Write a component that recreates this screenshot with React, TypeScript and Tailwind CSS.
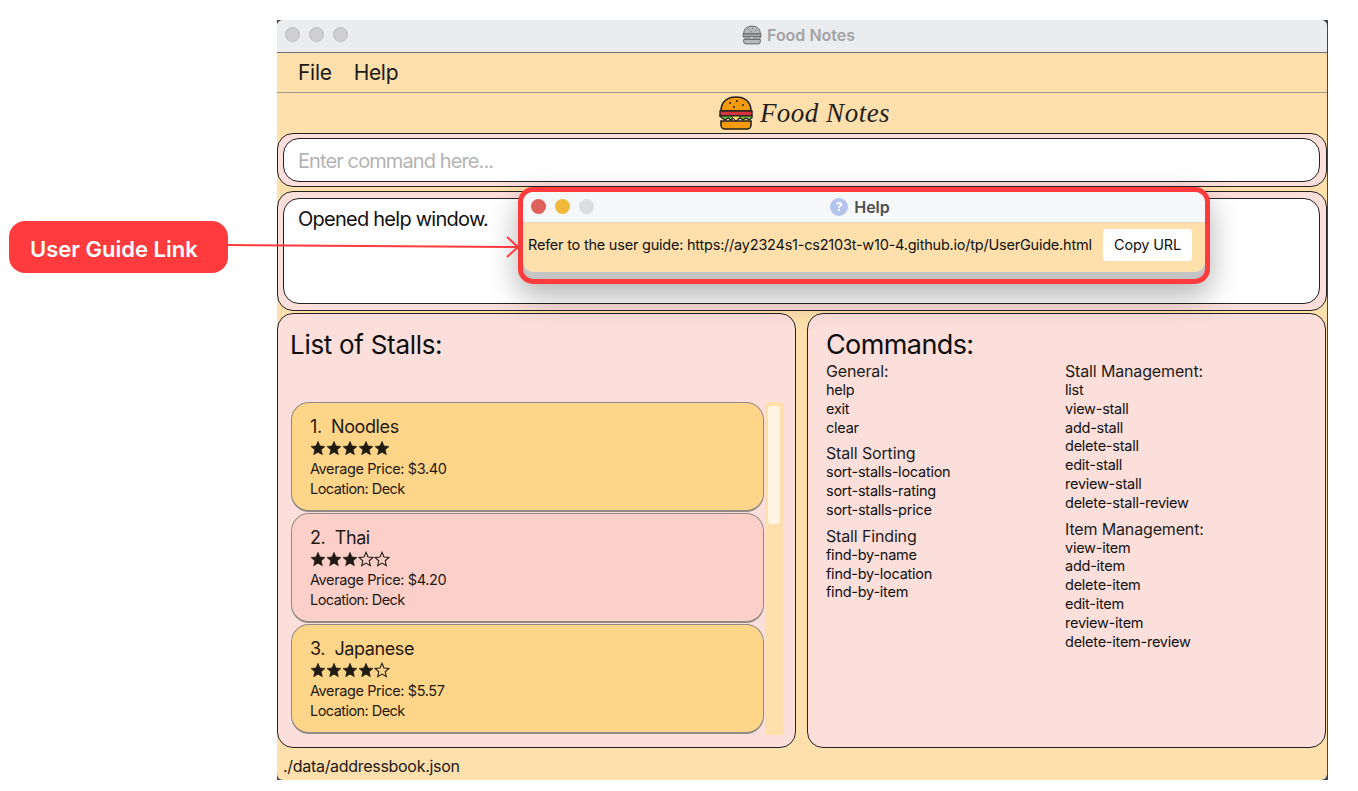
import React from 'react';

const stalls = [
  { name: '1.  Noodles', rating: 5, price: '$3.40', bg: 'bg-[#ffd589]' },
  { name: '2.  Thai', rating: 3, price: '$4.20', bg: 'bg-[#fdcfc9]' },
  { name: '3.  Japanese', rating: 4, price: '$5.57', bg: 'bg-[#ffd589]' },
];

const leftGroups = [
  { title: 'General:', items: ['help', 'exit', 'clear'] },
  { title: 'Stall Sorting', items: ['sort-stalls-location', 'sort-stalls-rating', 'sort-stalls-price'] },
  { title: 'Stall Finding', items: ['find-by-name', 'find-by-location', 'find-by-item'] },
];

const rightGroups = [
  {
    title: 'Stall Management:',
    items: ['list', 'view-stall', 'add-stall', 'delete-stall', 'edit-stall', 'review-stall', 'delete-stall-review'],
  },
  {
    title: 'Item Management:',
    items: ['view-item', 'add-item', 'delete-item', 'edit-item', 'review-item', 'delete-item-review'],
  },
];

const Burger = ({ grey = false, className }: { grey?: boolean; className?: string }) => (
  <svg viewBox="0 0 36 36" className={className}>
    <path d="M3 16C3 6 10 2 18 2s15 4 15 14z" fill={grey ? '#a3a3a3' : '#f59a0c'} stroke="#222" strokeWidth="1.6" />
    <path d="M11 8h2M18 6h2M24 10h2M15 12h2" stroke="#222" strokeWidth="1.4" />
    <rect x="2" y="16" width="32" height="5" fill={grey ? '#8a8a8a' : '#d8323c'} stroke="#222" strokeWidth="1.4" />
    <path d="M2 21h32v2l-3 2-3-2-3 2-3-2-3 2-3-2-3 2-3-2-3 2-3-2z" fill={grey ? '#b5b5b5' : '#6cbb3c'} stroke="#222" strokeWidth="1.2" />
    <path d="M13 21h10l-5 5z" fill={grey ? '#ddd' : '#ffe066'} stroke="#222" strokeWidth="1" />
    <path d="M3 26h30v4a4 4 0 0 1-4 4H7a4 4 0 0 1-4-4z" fill={grey ? '#a3a3a3' : '#f59a0c'} stroke="#222" strokeWidth="1.6" />
  </svg>
);

const Star = ({ filled }: { filled: boolean }) => (
  <svg viewBox="0 0 24 24" className="h-[16px] w-[16px]">
    <path
      d="M12 2l3 7 7.5.7-5.7 5 1.7 7.3L12 18.2 5.5 22l1.7-7.3-5.7-5L9 9z"
      fill={filled ? '#1f1a12' : 'none'}
      stroke="#1f1a12"
      strokeWidth={filled ? 1 : 1.6}
    />
  </svg>
);

const Dots = () => (
  <div className="flex gap-[9px]">
    <span className="h-[15px] w-[15px] rounded-full bg-[#cfcfd1] border border-[#bdbdbf]" />
    <span className="h-[15px] w-[15px] rounded-full bg-[#cfcfd1] border border-[#bdbdbf]" />
    <span className="h-[15px] w-[15px] rounded-full bg-[#cfcfd1] border border-[#bdbdbf]" />
  </div>
);

const CommandColumn = ({ groups }: { groups: { title: string; items: string[] }[] }) => (
  <div className="flex flex-col gap-[6px]">
    {groups.map((g) => (
      <div key={g.title}>
        <div className="text-[16px] leading-[20px] text-[#1c1c1c] tracking-[-0.15px]">{g.title}</div>
        {g.items.map((it) => (
          <div key={it} className="text-[14.5px] leading-[18.8px] text-[#111] tracking-[-0.25px]">
            {it}
          </div>
        ))}
      </div>
    ))}
  </div>
);

export default function App() {
  return (
    <div className="relative h-[791px] w-[1358px] overflow-hidden bg-white font-['Inter',sans-serif]">
      {/* main window, dark backing only shows at the corners and right edge */}
      <div className="ml-[277px] pt-[20px]">
        <div className="h-[760px] w-[1051px] bg-[#3f4552]">
          <div className="flex h-[760px] w-[1050px] flex-col overflow-hidden rounded-[6px] bg-[#ffdfac]">
            <div className="relative flex h-[33px] shrink-0 items-center border-b border-[#6f7074] bg-[#ebecee] pb-[3px] pl-[8px]">
              <Dots />
              <div className="absolute inset-x-0 top-[3px] flex items-center justify-center gap-[5px] pr-[7px]">
                <Burger grey className="h-[20px] w-[20px] opacity-70" />
                <span className="text-[16px] font-semibold text-[#a2a3a5]">Food Notes</span>
              </div>
            </div>

            <div className="flex h-[40px] shrink-0 items-center gap-[22px] border-b border-[#a0998c] pl-[21px] text-[21px] tracking-[-0.3px] text-[#1a1a1a]">
              <span>File</span>
              <span>Help</span>
            </div>

            <div className="flex h-[40px] shrink-0 items-center justify-center gap-[6px] pl-[4px]">
              <Burger className="h-[36px] w-[36px]" />
              <span className="font-['Liberation_Serif',serif] text-[27px] italic tracking-[0.5px] text-[#222]">
                Food Notes
              </span>
            </div>

            <div className="flex h-[54px] shrink-0 items-center rounded-[16px] border border-[#222] bg-[#fcdeda] pl-[5px] pr-[6px]">
              <div className="flex h-[44px] w-full items-center rounded-[16px] border border-[#222] bg-white pl-[14px] pt-[1px] text-[20px] tracking-[-0.9px] text-[#b4b4b4]">
                Enter command here...
              </div>
            </div>

            <div className="mt-[4px] h-[120px] shrink-0 rounded-[16px] border border-[#222] bg-[#fcdeda] pl-[5px] pr-[6px] py-[6px]">
              <div className="h-full rounded-[16px] border border-[#222] bg-white pl-[14px] pt-[7px] text-[20px] leading-[26px] tracking-[-0.75px] text-[#111]">
                Opened help window.
              </div>
            </div>

            <div className="mt-[2px] flex h-[435px] shrink-0 gap-[11px]">
              <div className="flex w-[519px] flex-col rounded-[16px] border border-[#222] bg-[#fcdeda] pl-[13px]">
                <div className="-ml-px mt-[14px] text-[26px] leading-[34px] tracking-[-0.3px] text-[#0d0d0d]">List of Stalls:</div>
                <div className="mt-[40px] flex gap-px">
                  <div className="flex w-[473px] flex-col gap-px">
                    {stalls.map((s) => (
                      <div
                        key={s.name}
                        className={`h-[110px] rounded-[18px] border border-[#8f8a84] border-b-[2px] ${s.bg} pl-[18px] pt-[12px] text-[#1f1a12]`}
                      >
                        <div className="whitespace-pre text-[18px] leading-[24px] tracking-[-0.4px]">{s.name}</div>
                        <div className="flex h-[18px] items-center">
                          {[0, 1, 2, 3, 4].map((i) => (
                            <Star key={i} filled={i < s.rating} />
                          ))}
                        </div>
                        <div className="mt-[1px] text-[14.5px] leading-[21px] tracking-[-0.4px]">Average Price: {s.price}</div>
                        <div className="text-[14.5px] leading-[20px] tracking-[-0.55px]">Location: Deck</div>
                      </div>
                    ))}
                  </div>
                  <div className="h-[333px] w-[18px] bg-[#ffdfac] px-[3px] pt-[4px]">
                    <div className="h-[118px] rounded-[3px] bg-[#fff4e6]" />
                  </div>
                </div>
              </div>

              <div className="flex w-[519px] flex-col rounded-[16px] border border-[#222] bg-[#fcdeda] pl-[18px]">
                <div className="mt-[14px] text-[27px] leading-[33px] tracking-[-0.6px] text-[#0d0d0d]">Commands:</div>
                <div className="flex">
                  <div className="w-[239px]">
                    <CommandColumn groups={leftGroups} />
                  </div>
                  <CommandColumn groups={rightGroups} />
                </div>
              </div>
            </div>

            <div className="flex flex-1 items-center pl-[6px] pt-[4px] text-[16px] tracking-[-0.3px] text-[#1a1a1a]">
              ./data/addressbook.json
            </div>
          </div>
        </div>
      </div>

      {/* help popup, sits over the main window */}
      <div className="absolute left-[518px] top-[187px] h-[97px] w-[692px] overflow-hidden rounded-[15px] border-[5px] border-[#ff3b3d] bg-[#c4c4c4] shadow-[0_12px_30px_rgba(0,0,0,0.3)]">
        <div className="relative flex h-[31px] items-center border-b border-[#e6d8bd] bg-[#f6f7f9] pl-[8px]">
          <div className="flex gap-[9px] pb-[2px]">
            <span className="h-[15px] w-[15px] rounded-full bg-[#e0605c]" />
            <span className="h-[15px] w-[15px] rounded-full bg-[#efb93c]" />
            <span className="h-[15px] w-[15px] rounded-full bg-[#dcdde0]" />
          </div>
          <div className="absolute inset-x-0 top-[3px] flex items-center justify-center gap-[6px] pr-[8px]">
            <span className="flex h-[18px] w-[18px] items-center justify-center rounded-full bg-[#b3c3ee] text-[12px] font-bold text-white">?</span>
            <span className="text-[16px] font-semibold text-[#4e4e50]">Help</span>
          </div>
        </div>
        <div className="flex h-[49px] items-start justify-between rounded-b-[10px] bg-[#ffdfac] pl-[5px] pr-[13px] pt-[6px]">
          <span className="pt-[6px] text-[14.5px] leading-[20px] tracking-[-0.22px] text-[#111]">
            Refer to the user guide: https://ay2324s1-cs2103t-w10-4.github.io/tp/UserGuide.html
          </span>
          <span className="flex h-[32px] w-[89px] items-center justify-center rounded-[3px] bg-white text-[14.5px] tracking-[-0.2px] text-[#111]">
            Copy URL
          </span>
        </div>
      </div>

      {/* annotation */}
      <div className="absolute left-[9px] top-[221px] flex h-[52px] w-[219px] items-center rounded-[16px] bg-[#ff3b3d] pl-[21px] pt-[5px] text-[22px] font-semibold text-white">
        User Guide Link
      </div>
      <svg className="absolute left-[228px] top-[235px] h-[24px] w-[292px]" viewBox="0 0 292 24" fill="none">
        <path d="M0 10L290 12M279 2L290 12L279 22" stroke="#ff3b3d" strokeWidth="2" />
      </svg>
    </div>
  );
}
